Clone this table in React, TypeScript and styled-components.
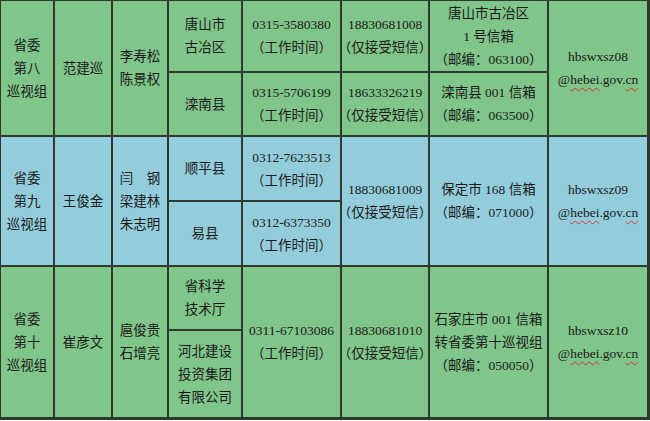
import React from 'react';
import styled, { createGlobalStyle } from 'styled-components';

const GlobalStyle = createGlobalStyle`
  html, body {
    margin: 0;
    padding: 0;
    background: #ffffff;
  }
`;

type Tone = 'green' | 'blue';

interface CellData {
  row: string;
  col: string;
  lines: React.ReactNode[];
}

interface GroupData {
  tone: Tone;
  cells: CellData[];
}

const Wavy = styled.span`
  text-decoration: underline wavy #e0302a;
  text-decoration-thickness: 1px;
  text-underline-offset: 3px;
`;

const Email = ({ id }: { id: string }) => [
  `hbswxsz${id}`,
  <span key="m">
    @<Wavy>hebei</Wavy>.gov.<Wavy>cn</Wavy>
  </span>,
];

const GROUPS: GroupData[] = [
  {
    tone: 'green',
    cells: [
      { row: '1 / 3', col: '1', lines: ['省委', '第八', '巡视组'] },
      { row: '1 / 3', col: '2', lines: ['范建巡'] },
      { row: '1 / 3', col: '3', lines: ['李寿松', '陈景权'] },
      { row: '1', col: '4', lines: ['唐山市', '古冶区'] },
      { row: '2', col: '4', lines: ['滦南县'] },
      { row: '1', col: '5', lines: ['0315-3580380', '（工作时间）'] },
      { row: '2', col: '5', lines: ['0315-5706199', '（工作时间）'] },
      { row: '1', col: '6', lines: ['18830681008', '（仅接受短信）'] },
      { row: '2', col: '6', lines: ['18633326219', '（仅接受短信）'] },
      { row: '1', col: '7', lines: ['唐山市古冶区', '1 号信箱', '（邮编：063100）'] },
      { row: '2', col: '7', lines: ['滦南县 001 信箱', '（邮编：063500）'] },
      { row: '1 / 3', col: '8', lines: Email({ id: '08' }) },
    ],
  },
  {
    tone: 'blue',
    cells: [
      { row: '3 / 5', col: '1', lines: ['省委', '第九', '巡视组'] },
      { row: '3 / 5', col: '2', lines: ['王俊金'] },
      { row: '3 / 5', col: '3', lines: ['闫\u3000钢', '梁建林', '朱志明'] },
      { row: '3', col: '4', lines: ['顺平县'] },
      { row: '4', col: '4', lines: ['易县'] },
      { row: '3', col: '5', lines: ['0312-7623513', '（工作时间）'] },
      { row: '4', col: '5', lines: ['0312-6373350', '（工作时间）'] },
      { row: '3 / 5', col: '6', lines: ['18830681009', '（仅接受短信）'] },
      { row: '3 / 5', col: '7', lines: ['保定市 168 信箱', '（邮编：071000）'] },
      { row: '3 / 5', col: '8', lines: Email({ id: '09' }) },
    ],
  },
  {
    tone: 'green',
    cells: [
      { row: '5 / 7', col: '1', lines: ['省委', '第十', '巡视组'] },
      { row: '5 / 7', col: '2', lines: ['崔彦文'] },
      { row: '5 / 7', col: '3', lines: ['扈俊贵', '石增亮'] },
      { row: '5', col: '4', lines: ['省科学', '技术厅'] },
      { row: '6', col: '4', lines: ['河北建设', '投资集团', '有限公司'] },
      { row: '5 / 7', col: '5', lines: ['0311-67103086', '（工作时间）'] },
      { row: '5 / 7', col: '6', lines: ['18830681010', '（仅接受短信）'] },
      { row: '5 / 7', col: '7', lines: ['石家庄市 001 信箱', '转省委第十巡视组', '（邮编：050050）'] },
      { row: '5 / 7', col: '8', lines: Email({ id: '10' }) },
    ],
  },
];

const App = () => {
  return (
    <>
      <GlobalStyle />
      <Table>
        {GROUPS.map((group, g) =>
          group.cells.map((cell, i) => (
            <Cell key={`${g}-${i}`} $tone={group.tone} $row={cell.row} $col={cell.col}>
              {cell.lines.map((line, j) => (
                <Line key={j}>{line}</Line>
              ))}
            </Cell>
          )),
        )}
      </Table>
    </>
  );
};

const Table = styled.div`
  box-sizing: border-box;
  width: 650px;
  height: 420px;
  display: grid;
  grid-template-columns: 52px 56px 54px 72px 97px 86px 117px 98px;
  grid-template-rows: 70px 62px 63px 63px 62px 86px;
  gap: 2px;
  padding: 1px 2px 2px 1px;
  background: #2e3a30;
  font-family: 'Liberation Serif', 'Noto Sans CJK SC', serif;
  font-size: 13.5px;
  color: #1a1a1a;
`;

const Cell = styled.div<{ $tone: Tone; $row: string; $col: string }>`
  grid-row: ${p => p.$row};
  grid-column: ${p => p.$col};
  background: ${p => (p.$tone === 'green' ? '#80c589' : '#93cddc')};
  display: flex;
  flex-direction: column;
  justify-content: center;
  align-items: center;
  text-align: center;
  line-height: 23px;
  white-space: nowrap;
`;

const Line = styled.div`
  white-space: pre;
`;

export default App;
